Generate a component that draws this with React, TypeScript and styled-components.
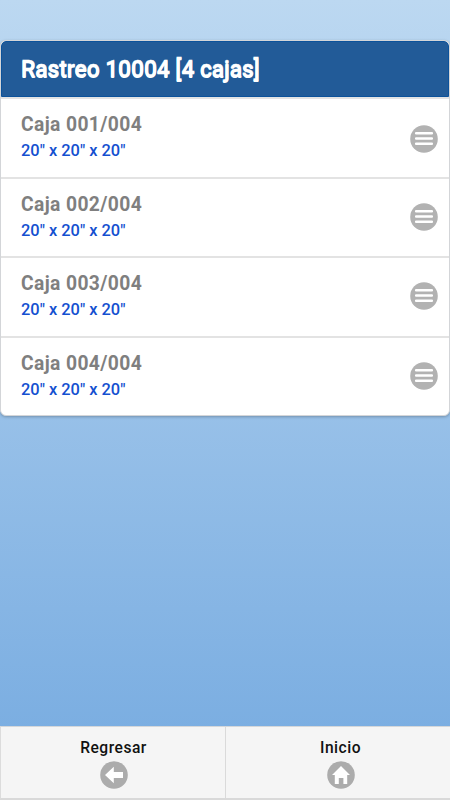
import React from "react";
import styled, { createGlobalStyle } from "styled-components";

const GlobalStyle = createGlobalStyle`
  * { box-sizing: border-box; }
  html, body { margin: 0; padding: 0; }
  body { font-family: Roboto, "Liberation Sans", sans-serif; }
`;

const Page = styled.div`
  display: flex;
  flex-direction: column;
  height: 800px;
  padding-top: 40px;
  overflow: hidden;
  background: linear-gradient(#bcd8f1, #75aae0);
`;

const List = styled.ul`
  list-style: none;
  margin: 0;
  padding: 0;
  height: 376px;
  border: 1px solid #d3d5d8;
  border-radius: 6px;
  overflow: hidden;
  background: #fff;
  box-shadow: 0 1px 3px rgba(0, 0, 0, 0.25);
`;

const Header = styled.li`
  height: 56px;
  padding-left: 19px;
  border: 1px solid #0c529b;
  border-radius: 5px 5px 0 0;
  background: #225b98;
  color: #fff;
  font-size: 23px;
  font-weight: 500;
  line-height: 55px;
  letter-spacing: -0.15px;
  text-shadow: 0 1px 0 #fff;
  -webkit-text-stroke: 0.4px #fff;
  white-space: nowrap;
`;

const Row = styled.li<{ $height: number }>`
  display: flex;
  align-items: flex-start;
  justify-content: space-between;
  height: ${(p) => p.$height}px;
  padding: 14px 11px 0 20px;
  border-top: 2px solid #e3e3e3;
`;

const RowTitle = styled.div`
  color: #7f7f7f;
  font-size: 19.3px;
  font-weight: 700;
  line-height: 24px;
  letter-spacing: 0.38px;
`;

const RowSize = styled.div`
  margin-top: 1px;
  color: #1450d0;
  font-size: 16.4px;
  font-weight: 500;
  line-height: 25px;
`;

const Icon = styled.svg`
  display: block;
  flex: none;
  width: 28px;
  height: 28px;
`;

const RowIcon = styled(Icon)<{ $top: number }>`
  margin-top: ${(p) => p.$top}px;
`;

const Footer = styled.nav`
  display: flex;
  height: 74px;
  margin-top: auto;
  border-top: 1px solid #d4d7da;
  border-bottom: 2px solid #d9d9d9;
  border-left: 1px solid #dcdcdc;
  background: #f5f5f5;
`;

const FooterButton = styled.a`
  display: flex;
  flex: 1 1 0;
  min-width: 0;
  flex-direction: column;
  align-items: center;
  padding-top: 11px;
  color: #111;
  font-size: 15.6px;
  font-weight: 500;
  line-height: 20px;
  letter-spacing: 0.5px;
  &:first-child { flex: 0 0 224px; padding-left: 1px; }
  & + & { border-left: 1px solid #dadada; padding-left: 5px; }
`;

const FooterIcon = styled(Icon)`
  margin-top: 3px;
`;

const boxes = [
  { title: "Caja 001/004", size: '20" x 20" x 20"', height: 80, iconTop: 12 },
  { title: "Caja 002/004", size: '20" x 20" x 20"', height: 79, iconTop: 10 },
  { title: "Caja 003/004", size: '20" x 20" x 20"', height: 80, iconTop: 10 },
  { title: "Caja 004/004", size: '20" x 20" x 20"', height: 79, iconTop: 10 },
];

export default function App() {
  return (
    <>
      <GlobalStyle />
      <Page>
        <List>
          <Header>Rastreo 10004 [4 cajas]</Header>
          {boxes.map((box) => (
            <Row key={box.title} $height={box.height}>
              <div>
                <RowTitle>{box.title}</RowTitle>
                <RowSize>{box.size}</RowSize>
              </div>
              <RowIcon $top={box.iconTop} viewBox="0 0 28 28">
                <circle cx="14" cy="14" r="13.8" fill="#b2b2b2" />
                <path d="M6.2 8.3h15.6M6.2 13.5h15.6M6.2 18.7h15.6" stroke="#fff" strokeWidth="2.6" strokeLinecap="round" />
              </RowIcon>
            </Row>
          ))}
        </List>
        <Footer>
          <FooterButton>
            Regresar
            <FooterIcon viewBox="0 0 28 28">
              <circle cx="14" cy="14" r="13.8" fill="#acacac" />
              <path d="M5 14 13.8 5.7V11H23v6h-9.2v5.3Z" fill="#fff" />
            </FooterIcon>
          </FooterButton>
          <FooterButton>
            Inicio
            <FooterIcon viewBox="0 0 28 28">
              <circle cx="14" cy="14" r="13.8" fill="#acacac" />
              <path d="M14 5 5 14h2.8v9h4v-6h4.6v6h3.8v-9H23Z" fill="#fff" />
            </FooterIcon>
          </FooterButton>
        </Footer>
      </Page>
    </>
  );
}
